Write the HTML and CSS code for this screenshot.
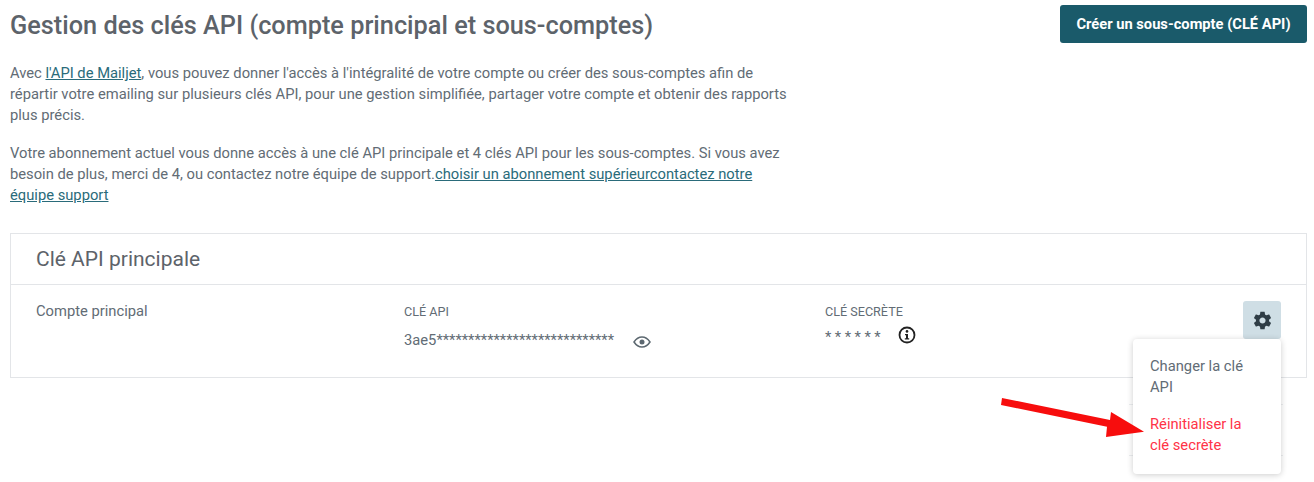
FILE: index.html
```html
<!DOCTYPE html>
<html lang="fr">
<head>
    <meta charset="UTF-8">
    <title>Gestion des clés API</title>
    <link rel="stylesheet" href="styles.css">
</head>
<body>
<div class="page">
    <div class="page-head">
        <h1>Gestion des clés API (compte principal et sous-comptes)</h1>
        <button class="create-button">Créer un sous-compte (CLÉ API)</button>
    </div>
    <div class="intro">
        <p>Avec <a href="#">l'API de Mailjet</a>, vous pouvez donner l'accès à l'intégralité de votre compte ou créer des sous-comptes afin de répartir votre emailing sur plusieurs clés API, pour une gestion simplifiée, partager votre compte et obtenir des rapports plus précis.</p>
        <p>Votre abonnement actuel vous donne accès à une clé API principale et 4 clés API pour les sous-comptes. Si vous avez besoin de plus, merci de 4, ou contactez notre équipe de support.<a href="#">choisir un abonnement supérieurcontactez notre équipe support</a></p>
    </div>
    <div class="card">
        <div class="card-title">Clé API principale</div>
        <div class="card-row">
            <div class="col-account">Compte principal</div>
            <div class="col-key">
                <div class="label">CLÉ API</div>
                <div class="value">
                    <span>3ae5****************************</span>
                    <svg class="eye" width="18" height="12" viewBox="0 0 18 12">
                        <path d="M1 6c2-3 4.800-5 8-5s6 2 8 5c-2 3-4.800 5-8 5s-6-2-8-5z" fill="none" stroke="#5c6870" stroke-width="1.500"/>
                        <circle cx="9" cy="6" r="2.500" fill="#5c6870"/>
                    </svg>
                </div>
            </div>
            <div class="col-secret">
                <div class="label">CLÉ SECRÈTE</div>
                <div class="value">
                    <span class="stars">******</span>
                    <svg class="info" width="18" height="18" viewBox="0 0 18 18">
                        <circle cx="9" cy="9" r="7.500" fill="none" stroke="#222" stroke-width="1.800"/>
                        <circle cx="9" cy="5.400" r="1.300" fill="#222"/>
                        <path d="M7 8h3v4.200h1.200v1.300H6.800v-1.300H8V9.300H7z" fill="#222"/>
                    </svg>
                </div>
            </div>
            <button class="gear-button">
                <svg width="21" height="21" viewBox="0 0 24 24">
                    <path fill="#2f3d46" d="M19.430 12.980c.040-.320.070-.640.070-.980s-.030-.660-.070-.980l2.110-1.650c.190-.150.240-.420.120-.640l-2-3.460c-.120-.220-.390-.300-.610-.220l-2.490 1c-.520-.400-1.080-.730-1.690-.980l-.380-2.650C14.460 2.180 14.250 2 14 2h-4c-.250 0-.460.180-.490.420l-.380 2.650c-.610.250-1.170.590-1.690.980l-2.490-1c-.230-.090-.490 0-.610.220l-2 3.460c-.130.220-.070.490.120.640l2.110 1.650c-.040.320-.070.650-.070.980s.030.660.070.980l-2.110 1.650c-.190.150-.240.420-.120.640l2 3.460c.120.220.390.300.610.220l2.490-1c.520.400 1.080.730 1.690.980l.380 2.650c.030.240.240.420.490.420h4c.250 0 .460-.180.490-.420l.380-2.650c.610-.250 1.170-.590 1.690-.980l2.490 1c.230.090.490 0 .610-.220l2-3.460c.120-.220.070-.490-.120-.640l-2.110-1.650zM12 15.500c-1.930 0-3.500-1.570-3.500-3.500s1.570-3.500 3.500-3.500 3.500 1.570 3.500 3.500-1.570 3.500-3.500 3.500z"/>
                </svg>
            </button>
        </div>
    </div>
</div>

<!-- faint rows that stick out behind the open menu -->
<div class="menu-rule rule-top"></div>
<div class="menu-rule rule-bottom"></div>
<div class="menu">
    <div class="menu-item">Changer la clé API</div>
    <div class="menu-item danger">Réinitialiser la clé secrète</div>
</div>

<!-- annotation arrow drawn over the screenshot -->
<svg class="arrow" width="150" height="50" viewBox="0 0 150 50">
    <path d="M1 1L109 23L110 15L143 34.700L105 40L106 29.700L0 8z" fill="#f70d0d"/>
</svg>
</body>
</html>
```

FILE: styles.css
```css
html, body { margin: 0; padding: 0; }
body {
    font-family: Roboto, "Liberation Sans", sans-serif;
    font-size: 14.74px;
    line-height: 21px;
    color: #626c75;
    background: #fff;
    position: relative;
    height: 482px;
    overflow: hidden;
}
.page { padding: 5px 7px 0 10px; }
.page-head {
    display: flex;
    justify-content: space-between;
    align-items: flex-start;
}
h1 {
    margin: 3px 0 1px;
    font-size: 25.3px;
    line-height: 36px;
    font-weight: 500;
    color: #5d636a;
}
.create-button {
    width: 247px;
    height: 38px;
    border: 0;
    border-radius: 3px;
    background: #1a5a6a;
    color: #fff;
    font: 700 14.7px Roboto, sans-serif;
}
.intro { width: 780px; margin-top: 18px; }
.intro p { margin: 0 0 17px; }
.intro a { color: #2a6b7a; text-decoration: underline; }
.card {
    border: 1px solid #e3e5e8;
    margin-top: 27px;
    height: 143px;
}
.card-title {
    height: 50px;
    padding-left: 25px;
    font-size: 21px;
    line-height: 50px;
    color: #5d636a;
    border-bottom: 1px solid #e3e5e8;
}
.card-row { display: flex; padding: 16px 25px 0; }
.col-account { width: 368px; }
.col-key { width: 421px; }
.col-secret { flex: 1; }
.label { font-size: 12.6px; line-height: 21px; }
.value { display: flex; align-items: center; margin-top: 8px; }
.eye { margin-left: 19px; margin-top: 2px; }
.col-secret .value { margin-top: 2px; align-items: flex-start; }
.stars { letter-spacing: 3.500px; padding-top: 3px; }
.info { margin-left: 14px; margin-top: 2px; }
.gear-button {
    display: flex;
    align-items: center;
    justify-content: center;
    width: 38px;
    height: 38px;
    padding: 0;
    border: 0;
    border-radius: 3px;
    background: #cfdee5;
    margin: 0;
}
.menu-rule {
    position: absolute;
    left: 1129px;
    width: 154px;
    height: 1px;
    background: #eceef0;
}
.rule-top { top: 404px; }
.rule-bottom { top: 455px; }
.menu {
    position: absolute;
    left: 1133px;
    top: 339px;
    width: 148px;
    height: 135px;
    box-sizing: border-box;
    padding: 17px 24px 17px 17px;
    background: #fff;
    border-radius: 4px;
    box-shadow: 0 1px 6px rgba(0, 0, 0, .2);
}
.menu-item + .menu-item { margin-top: 16px; }
.danger { color: #ff3347; }
.arrow { position: absolute; left: 1001px; top: 397px; }
```
